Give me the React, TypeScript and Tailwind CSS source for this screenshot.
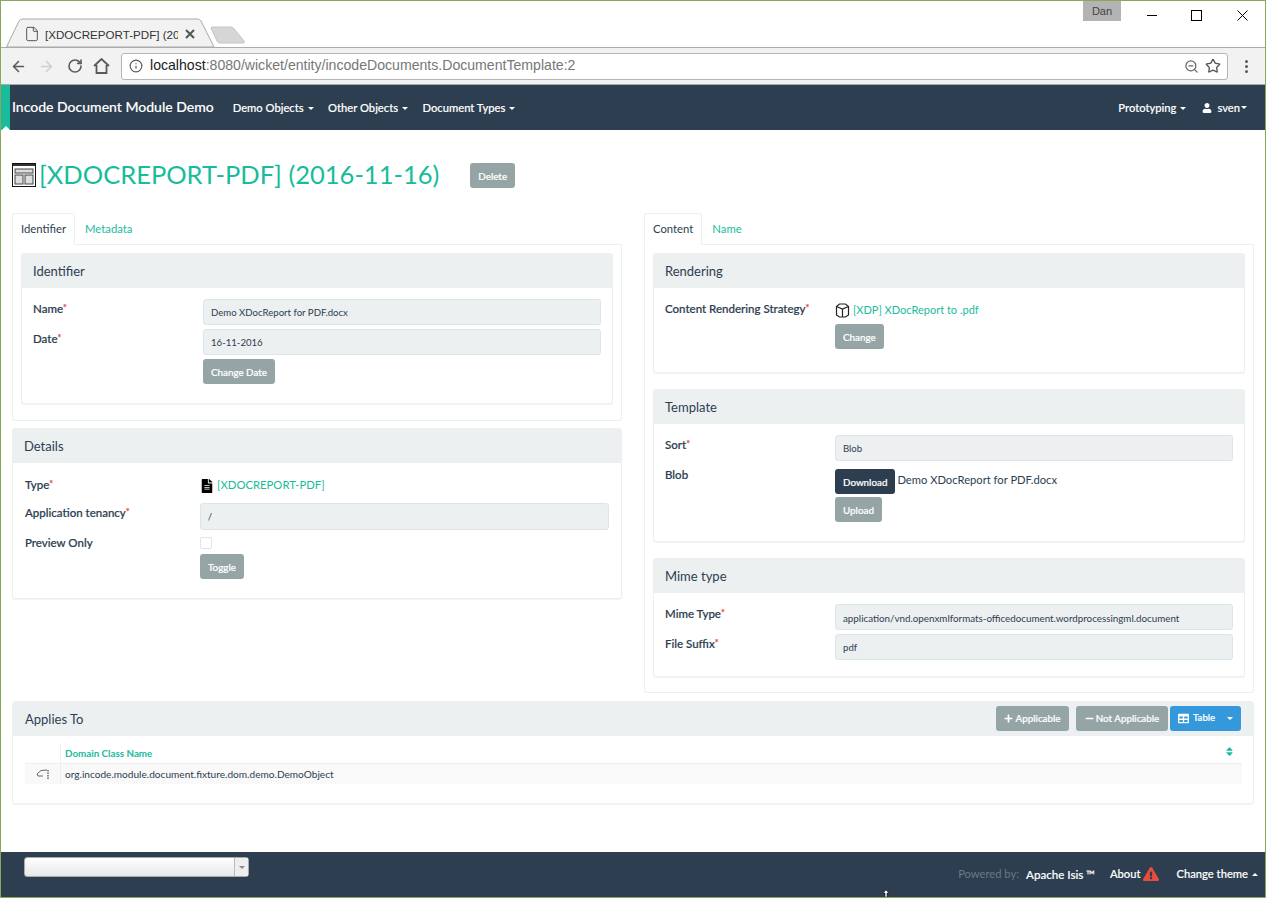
import React from "react";
import { ArrowLeft, ArrowRight, RotateCw, Info, ZoomOut, Star, File } from "lucide-react";
import { FaUser, FaTable, FaPlus, FaMinus, FaFileAlt, FaExclamationTriangle, FaSort } from "react-icons/fa";

const Caret = ({ up = false, className = "ml-[4px]" }: { up?: boolean; className?: string }) => (
  <span className={`inline-block align-middle w-0 h-0 border-x-[3px] border-x-transparent ${up ? "border-b-[3px] border-b-current" : "border-t-[3px] border-t-current"} ${className}`} />
);

const Btn = ({ children, className = "", dark = false }: { children: React.ReactNode; className?: string; dark?: boolean }) => (
  <div className={`inline-flex items-center justify-center h-[25px] px-[8px] rounded-[3px] text-white text-[9.8px] font-medium whitespace-nowrap [-webkit-text-stroke:0.2px] ${dark ? "bg-[#2c3e50]" : "bg-[#95a5a6]"} ${className}`}>{children}</div>
);

const Panel = ({ title, className = "", bodyClass = "", children }: { title: string; className?: string; bodyClass?: string; children: React.ReactNode }) => (
  <div className={`rounded-[3px] border border-[#ecf0f1] shadow-[0_1px_1px_rgba(0,0,0,0.05)] bg-white ${className}`}>
    <div className="h-[34px] bg-[#ecf0f1] flex items-center px-[11px] pt-[2px] text-[13px] text-[#2c3e50]">{title}</div>
    <div className={bodyClass}>{children}</div>
  </div>
);

const Req = () => <sup className="text-[#e74c3c] text-[9px] top-[-2px] relative align-baseline leading-none">*</sup>;

const Label = ({ children, className = "" }: { children: React.ReactNode; className?: string }) => (
  <div className={`text-[11.5px] font-medium text-[#2c3e50] leading-[16px] [-webkit-text-stroke:0.2px] ${className}`}>{children}</div>
);

const Input = ({ v, className = "", long = false }: { v: string; className?: string; long?: boolean }) => (
  <div className={`flex items-center rounded-[3px] border border-[#dce4ec] bg-[#ecf0f1] text-[#2c3e50] px-[7px] pt-[2px] ${long ? "text-[9.8px]" : "text-[9.6px]"} ${className}`}>{v}</div>
);

const Tabs = ({ a, b }: { a: string; b: string }) => (
  <div className="flex h-[32px] border-b border-[#ecf0f1] text-[11.3px]">
    <div className="h-[32px] px-[8px] pt-[7px] border border-[#ecf0f1] border-b-white bg-white rounded-t-[3px] text-[#2c3e50]">{a}</div>
    <div className="px-[10px] pt-[8px] text-[#18bc9c]">{b}</div>
  </div>
);

export default function App() {
  return (
    <div className="relative w-[1266px] h-[898px] overflow-hidden bg-white border border-[#8aa85c] flex flex-col text-[#2c3e50]" style={{ fontFamily: "Lato, 'Open Sans', sans-serif" }}>
      {/* browser chrome */}
      <div className="relative h-[47px] shrink-0 bg-white border-b border-[#ababab]">
        <svg className="absolute left-0 top-[17px]" width="260" height="30" viewBox="0 0 260 30">
          <path d="M5 30 L18 3 Q19 1 22 1 L196 1 Q199 1 200 3 L213 29 L5 29 Z" fill="#f2f2f2" stroke="#a9a9a9" />
          <path d="M210 4 Q210 3 212 3 L230 3 Q232 3 234 6 L243 17 Q244 19 242 19 L219 19 Q217 19 216 17 Z" transform="translate(0 6)" fill="#d6d6d6" stroke="#c4c4c4" />
        </svg>
        <File className="absolute left-[23px] top-[25px] text-[#555]" size={16} strokeWidth={1.5} />
        <div className="absolute left-[44px] top-[26px] w-[133px] overflow-hidden whitespace-nowrap text-[11.6px] leading-[15px] text-[#333]" style={{ fontFamily: "'Liberation Sans', sans-serif" }}>[XDOCREPORT-PDF] (20</div>
        <svg className="absolute left-[184px] top-[28px]" width="10" height="10" viewBox="0 0 10 10" stroke="#555" strokeWidth="2"><path d="M1 1 L9 9 M9 1 L1 9" /></svg>
        <div className="absolute left-[1082px] top-0 w-[38px] h-[20px] bg-[#b3b3b3] text-[#444] text-[11px] text-center leading-[20px]" style={{ fontFamily: "'Liberation Sans', sans-serif" }}>Dan</div>
        <svg className="absolute left-[1145px] top-[9px]" width="12" height="10" viewBox="0 0 12 10" stroke="#000"><path d="M1 5.5 L11 5.5" /></svg>
        <svg className="absolute left-[1190px] top-[9px]" width="11" height="11" viewBox="0 0 11 11" fill="none" stroke="#000"><rect x="0.5" y="0.5" width="10" height="10" /></svg>
        <svg className="absolute left-[1236px] top-[9px]" width="11" height="11" viewBox="0 0 11 11" fill="none" stroke="#000"><path d="M0.5 0.5 L10.5 10.5 M10.5 0.5 L0.5 10.5" /></svg>
      </div>
      <div className="h-[37px] shrink-0 bg-[#f2f2f2] border-b border-[#a9a9a9] flex items-center pl-[9px]">
        <ArrowLeft size={17} className="text-[#5a5a5a]" strokeWidth={2.2} />
        <ArrowRight size={17} className="ml-[11px] text-[#cfcfcf]" strokeWidth={2.2} />
        <RotateCw size={16} className="ml-[12px] text-[#5a5a5a]" strokeWidth={2.4} />
        <svg className="ml-[10px] text-[#5a5a5a]" width="17" height="16" viewBox="0 0 17 16" fill="none" stroke="currentColor" strokeWidth="1.8"><path d="M1 8 L8.5 1 L16 8 M3.5 7 L3.5 15 L13.5 15 L13.5 7" /></svg>
        <div className="ml-[11px] w-[1107px] h-[27px] bg-white border border-[#b5b5b5] rounded-[3px] flex items-center pl-[7px] pr-[6px]" style={{ fontFamily: "'Liberation Sans', sans-serif" }}>
          <Info size={14} className="text-[#5a5a5a]" strokeWidth={2} />
          <div className="ml-[7px] text-[14.1px] text-[#777] flex-1 whitespace-nowrap"><span className="text-[#222]">localhost</span>:8080/wicket/entity/incodeDocuments.DocumentTemplate:2</div>
          <ZoomOut size={15} className="text-[#666]" strokeWidth={2} />
          <Star size={16} className="ml-[6px] text-[#555]" strokeWidth={2} />
        </div>
        <div className="ml-[17px] flex flex-col gap-[2px]">
          <span className="w-[3px] h-[3px] rounded-full bg-[#5a5a5a]" />
          <span className="w-[3px] h-[3px] rounded-full bg-[#5a5a5a]" />
          <span className="w-[3px] h-[3px] rounded-full bg-[#5a5a5a]" />
        </div>
      </div>

      {/* navbar */}
      <div className="relative h-[45px] shrink-0 bg-[#2c3e50] flex items-center text-white text-[11.2px] font-medium border-l-[9px] border-[#18bc9c] [-webkit-text-stroke:0.15px]">
        <div className="absolute left-[-8px] bottom-0 w-0 h-0 border-x-[4px] border-x-transparent border-b-[4px] border-b-white" />
        <div className="ml-[2px] mb-[3px] text-[14px]">Incode Document Module Demo</div>
        <div className="ml-[19px] mt-[1px] flex gap-[14.5px]">
          <div>Demo Objects<Caret /></div>
          <div>Other Objects<Caret /></div>
          <div>Document Types<Caret /></div>
        </div>
        <div className="ml-auto mr-[18px] mt-[1px] flex gap-[16px] items-center">
          <div>Prototyping<Caret /></div>
          <div className="flex items-center"><FaUser size={10} className="mr-[5px]" />sven<Caret className="ml-[1px]" /></div>
        </div>
      </div>

      {/* content */}
      <div className="flex-1 px-[11px] pt-[28px]">
        <div className="flex items-center h-[34px]">
          <svg width="24" height="24" viewBox="0 0 24 24">
            <rect x="0.5" y="0.5" width="23" height="23" fill="#fff" stroke="#111" />
            <rect x="1" y="1" width="22" height="2" fill="#333" />
            <rect x="3" y="6" width="18" height="4" fill="#ddd" stroke="#444" />
            <rect x="3" y="12" width="8" height="9" fill="#ddd" stroke="#444" />
            <rect x="13" y="12" width="8" height="9" fill="#ddd" stroke="#444" />
          </svg>
          <div className="ml-[3px] -mt-[1px] text-[25.5px] text-[#18bc9c] whitespace-nowrap">[XDOCREPORT-PDF] (2016-11-16)</div>
          <Btn className="ml-[31px] pt-[2px]">Delete</Btn>
        </div>

        <div className="mt-[21px] flex gap-[22px] items-start">
          <div className="w-[610px]">
            <Tabs a="Identifier" b="Metadata" />
            <div className="border border-t-0 border-[#ecf0f1] px-[8px] pt-[8px] pb-[16px] rounded-b-[3px]">
              <Panel title="Identifier" bodyClass="h-[115px] px-[11px] pt-[11px]">
                <div className="flex"><Label className="w-[170px] pt-[2px]">Name<Req /></Label><Input v="Demo XDocReport for PDF.docx" className="w-[398px] h-[26px]" /></div>
                <div className="flex mt-[4px]"><Label className="w-[170px] pt-[2px]">Date<Req /></Label><Input v="16-11-2016" className="w-[398px] h-[26px]" /></div>
                <div className="pl-[170px] mt-[3px]"><Btn className="pt-[2px]">Change Date</Btn></div>
              </Panel>
            </div>
            <Panel title="Details" className="mt-[7px]" bodyClass="h-[135px] px-[12px] pt-[14px]">
              <div className="flex items-start"><Label className="w-[175px]">Type<Req /></Label><div className="flex items-center"><FaFileAlt size={14} className="text-black mr-[3px] mt-[1px]" /><span className="text-[11.3px] text-[#18bc9c] leading-[16px]">[XDOCREPORT-PDF]</span></div></div>
              <div className="flex mt-[10px]"><Label className="w-[175px] pt-[2px]">Application tenancy<Req /></Label><Input v="/" className="w-[410px] h-[27px]" /></div>
              <div className="flex mt-[5px] items-center"><Label className="w-[175px]">Preview Only</Label><div className="w-[12px] h-[12px] border border-[#dce4ec] rounded-[2px] bg-white" /></div>
              <div className="pl-[175px] mt-[2px]"><Btn className="pt-[2px]">Toggle</Btn></div>
            </Panel>
          </div>

          <div className="w-[610px]">
            <Tabs a="Content" b="Name" />
            <div className="border border-t-0 border-[#ecf0f1] px-[8px] pt-[8px] pb-[15px] rounded-b-[3px] flex flex-col gap-[16px]">
              <Panel title="Rendering" bodyClass="h-[84px] px-[11px] pt-[13px]">
                <div className="flex items-start"><Label className="w-[170px]">Content Rendering Strategy<Req /></Label><div className="flex items-center">
                  <svg className="mr-[3px] mt-[1px]" width="15" height="15" viewBox="0 0 15 15" fill="none" stroke="#222" strokeWidth="1.2"><path d="M1.5 3.5 L4.5 1 L10.5 1 L13.5 3.5 L13.5 12 L10.5 14 L4.5 14 L1.5 12 Z" /><path d="M1.5 3.5 L7.5 6 L13.5 3.5 M7.5 6 L7.5 14" /></svg>
                  <span className="text-[11px] text-[#18bc9c] leading-[16px] mt-[1px]">[XDP] XDocReport to .pdf</span></div></div>
                <div className="pl-[170px] mt-[5px]"><Btn className="pt-[1px]">Change</Btn></div>
              </Panel>
              <Panel title="Template" bodyClass="h-[117px] px-[11px] pt-[11px]">
                <div className="flex"><Label className="w-[170px] pt-[2px]">Sort<Req /></Label><Input v="Blob" className="w-[398px] h-[26px]" /></div>
                <div className="flex mt-[8px]"><Label className="w-[170px] -mt-[2px]">Blob</Label><div><div className="flex items-start"><Btn dark className="pt-[2px]">Download</Btn><span className="ml-[2px] text-[11.2px] leading-[22px]">Demo XDocReport for PDF.docx</span></div><Btn className="mt-[3px] pt-[2px]">Upload</Btn></div></div>
              </Panel>
              <Panel title="Mime type" bodyClass="h-[83px] px-[11px] pt-[11px]">
                <div className="flex"><Label className="w-[170px] pt-[2px]">Mime Type<Req /></Label><Input long v="application/vnd.openxmlformats-officedocument.wordprocessingml.document" className="w-[398px] h-[26px]" /></div>
                <div className="flex mt-[4px]"><Label className="w-[170px] pt-[2px]">File Suffix<Req /></Label><Input v="pdf" className="w-[398px] h-[26px]" /></div>
              </Panel>
            </div>
          </div>
        </div>

        <div className="mt-[8px] rounded-[3px] border border-[#ecf0f1] shadow-[0_1px_1px_rgba(0,0,0,0.05)] h-[103px]">
          <div className="h-[34px] bg-[#ecf0f1] flex items-center pl-[12px] pr-[12px] text-[13px]">
            <span className="pt-[2px]">Applies To</span>
            <div className="ml-auto flex items-center mb-[2px]">
              <Btn className="w-[73px] mr-[7px] px-0 pt-[1px]"><FaPlus size={9} className="mr-[2px]" />Applicable</Btn>
              <Btn className="w-[92px] mr-[2px] px-0 pt-[1px]"><FaMinus size={9} className="mr-[2px]" />Not Applicable</Btn>
              <div className="w-[71px] h-[25px] rounded-[3px] bg-[#3498db] text-white text-[9.6px] font-medium flex items-center pl-[8px] [-webkit-text-stroke:0.2px]"><FaTable size={11} className="mr-[4px]" />Table<Caret className="ml-[12px]" /></div>
            </div>
          </div>
          <div className="px-[12px] pt-[7px]">
            <div className="flex h-[21px] border-b border-[#ecf0f1] w-[1217px]">
              <div className="w-[36px] border-r border-[#ecf0f1]" />
              <div className="flex-1 pl-[4px] text-[9.8px] font-bold text-[#18bc9c] leading-[20px]">Domain Class Name</div>
              <FaSort size={11} className="text-[#18bc9c] mr-[7px] mt-[3px]" />
            </div>
            <div className="flex h-[20px] bg-[#f9f9f9] w-[1217px] items-center">
              <div className="w-[36px] h-full border-r border-[#ecf0f1] flex items-center justify-center">
                <svg width="14" height="11" viewBox="0 0 14 11" fill="none" stroke="#666"><path d="M1 5 L5 1.5 L11 1" /><path d="M1 5 L2 7 L7 7" /><path d="M12 1 L12 10" strokeDasharray="1.5 1" strokeWidth="1.5" /></svg>
              </div>
              <div className="pl-[4px] pt-[1px] text-[10.1px]">org.incode.module.document.fixture.dom.demo.DemoObject</div>
            </div>
          </div>
        </div>
      </div>

      {/* footer */}
      <div className="relative h-[45px] shrink-0 bg-[#2c3e50] text-white text-[11.2px] font-medium flex items-start pl-[23px] pr-[7px] [-webkit-text-stroke:0.15px]">
        <div className="mt-[5px] w-[225px] h-[20px] rounded-[3px] bg-gradient-to-b from-white to-[#e8e8e8] border border-[#aaa] flex justify-end">
          <div className="w-[14px] bg-[#eee] border-l border-[#bbb] flex items-center justify-center text-[#888]"><Caret className="ml-0" /></div>
        </div>
        <div className="ml-auto mt-[14px] flex items-center">
          <span className="text-[#6b7a86] font-normal text-[11.2px] mr-[7px] [-webkit-text-stroke:0px]">Powered by:</span>
          <span className="mr-[15px] text-[11.6px]">Apache Isis ™</span>
          <span>About</span>
          <FaExclamationTriangle size={16} className="text-[#e74c3c] ml-[2px] mr-[18px] -mt-[1px]" />
          <span>Change theme</span>
          <Caret up />
        </div>
        <svg className="absolute left-[880px] top-[38px]" width="10" height="7" viewBox="0 0 10 7"><path d="M5 0 L8 3 L6 3 L6 7 L4 7 L4 3 L2 3 Z" fill="#fff" stroke="#000" strokeWidth="0.5" /></svg>
      </div>
    </div>
  );
}
